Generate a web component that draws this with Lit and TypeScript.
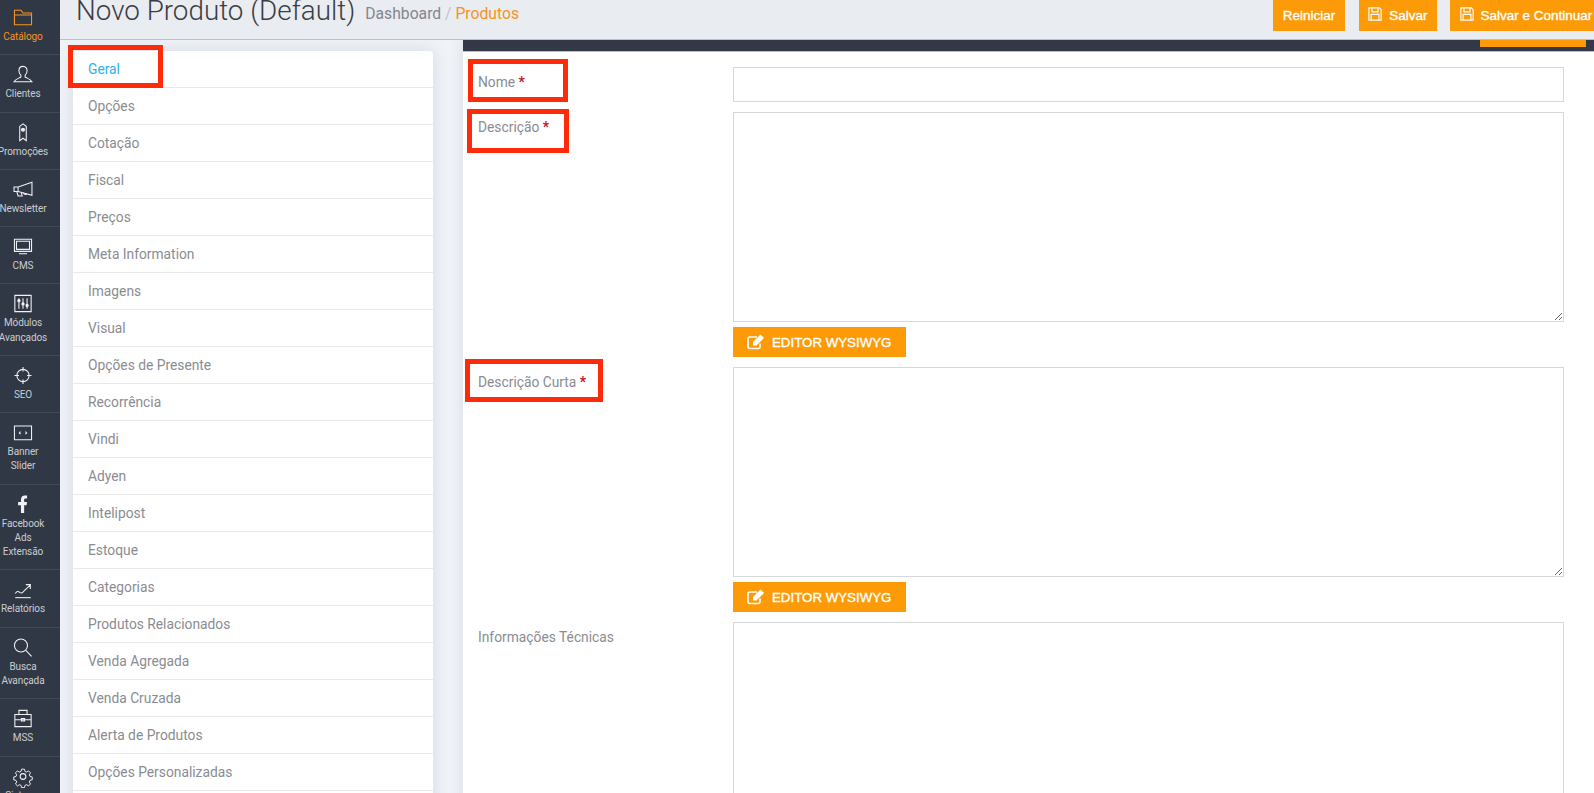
import { LitElement, html, css, svg } from 'lit';
import { customElement } from 'lit/decorators.js';

type NavItem = {
  label: string[];
  icon: unknown;
  active?: boolean;
};

const icons = {
  folder: svg`<path d="M3 21.500V3.500h8l2.500 3.500H24v14.500z M3 9.500h21"/>`,
  user: svg`<path d="M13.500 2.500c-3.400 0-5 2.600-5 5.400 0 2.400 1 4.200 2.400 5.600v2.100c-1.600 1.200-6.400 2-8.400 5.900h22c-2-3.900-6.800-4.700-8.400-5.900v-2.100c1.400-1.400 2.400-3.200 2.400-5.600 0-2.800-1.600-5.400-5-5.400z"/>`,
  ribbon: svg`<path d="M9.500 5l4-3 4 3v17.500l-4-3-4 3z"/><circle cx="13.500" cy="9" r="1.800" fill="currentColor"/>`,
  megaphone: svg`<path d="M2.500 9.500h5l17-6v16l-17-4.500h-5z M7.500 9.500V15"/><path d="M6 15.500l1.500 5h5l-1-4 M14 16.500a2.500 2.500 0 0 0 4 1.500"/>`,
  monitor: svg`<path d="M3 3.500h21v15H3z M5.500 6h16v10h-16z M8.500 21.500h10"/>`,
  sliders: svg`<path d="M3.500 2.500h20v20h-20z"/><path d="M8.500 6v13 M13.500 6v13 M18.500 6v13"/><circle cx="8.500" cy="9" r="1.400" fill="currentColor"/><circle cx="13.500" cy="13" r="1.400" fill="currentColor"/><circle cx="18.500" cy="15" r="1.400" fill="currentColor"/>`,
  target: svg`<circle cx="13.500" cy="12.500" r="7.500"/><path d="M13.500 2v5.500 M13.500 17.500V23 M3 12.500h5.500 M18.500 12.500H24"/>`,
  code: svg`<path d="M3 4.500h21v17H3z"/><path d="M10.500 11.500L9 13l1.500 1.500 M16.500 11.500L18 13l-1.500 1.500"/>`,
  trend: svg`<path d="M4 22.500h19"/><path d="M4 17.500c2-3 3.500-3 5.500-1.500s3.500 1 6-2.500l6.500-6 M17 6.500h5.500V12"/>`,
  search: svg`<circle cx="11" cy="10" r="8"/><path d="M17 16l7 7.500"/>`,
  briefcase: svg`<path d="M3.500 7.500h20v15h-20z M3.500 14h20 M8.500 7.500v-5h10v5 M11.500 12.500h4v3h-4z"/>`,
  gear: svg`<circle cx="13.500" cy="12.500" r="3.500"/><path d="M11.500 2.500h4l.6 3 2.300 1 2.600-1.700 2.800 2.800-1.700 2.600 1 2.300 3 .6v4l-3 .6-1 2.300 1.700 2.600-2.800 2.800-2.600-1.700-2.300 1-.6 3h-4l-.6-3-2.300-1-2.600 1.700-2.800-2.800 1.700-2.600-1-2.300-3-.6v-4l3-.6 1-2.300-1.700-2.600 2.800-2.800 2.600 1.700 2.300-1z" transform="translate(1.350 1.250) scale(.9)"/>`,
  facebook: svg`<path class="solid" d="M11 23v-9.500H7.500V9.500H11V6.500C11 3.500 12.800 1.500 15.800 1.500c1.300 0 2.500.1 2.700.1v3.600h-1.900c-1.400 0-1.700.7-1.700 1.800v2.500h3.500l-.5 4h-3V23z"/>`,
};

const navItems: NavItem[] = [
  { label: ['Catálogo'], icon: icons.folder, active: true },
  { label: ['Clientes'], icon: icons.user },
  { label: ['Promoções'], icon: icons.ribbon },
  { label: ['Newsletter'], icon: icons.megaphone },
  { label: ['CMS'], icon: icons.monitor },
  { label: ['Módulos', 'Avançados'], icon: icons.sliders },
  { label: ['SEO'], icon: icons.target },
  { label: ['Banner', 'Slider'], icon: icons.code },
  { label: ['Facebook', 'Ads', 'Extensão'], icon: icons.facebook },
  { label: ['Relatórios'], icon: icons.trend },
  { label: ['Busca', 'Avançada'], icon: icons.search },
  { label: ['MSS'], icon: icons.briefcase },
  { label: ['Sistema'], icon: icons.gear },
];

const tabs = [
  'Geral', 'Opções', 'Cotação', 'Fiscal', 'Preços', 'Meta Information', 'Imagens',
  'Visual', 'Opções de Presente', 'Recorrência', 'Vindi', 'Adyen', 'Intelipost',
  'Estoque', 'Categorias', 'Produtos Relacionados', 'Venda Agregada', 'Venda Cruzada',
  'Alerta de Produtos', 'Opções Personalizadas', 'Downloads',
];

const saveIcon = html`<svg class="btn-icon" viewBox="0 0 16 16" fill="none" stroke="currentColor" stroke-width="1.300">
  <path d="M1 1h12l2 2v12H1z M4.500 1v4.500h7V1 M3.500 15V8.500h9V15"/>
</svg>`;

const editIcon = html`<svg class="edit-icon" viewBox="0 0 18 16">
  <path d="M13 9.500v3a2 2 0 0 1-2 2H3a2 2 0 0 1-2-2V5a2 2 0 0 1 2-2h7" fill="none" stroke="currentColor" stroke-width="1.600"/>
  <path d="M6 8l7.500-7.500 3.500 3.500L9.500 11.500H6z" fill="currentColor"/>
</svg>`;

@customElement('app-root')
export class AppRoot extends LitElement {
  static styles = css`
    :host {
      display: block;
      position: relative;
      height: 793px;
      overflow: hidden;
      background: #f0f3f8;
      font-family: Roboto, 'Liberation Sans', sans-serif;
    }

    .page {
      display: grid;
      grid-template-columns: 60px 1fr;
      height: 793px;
    }

    .side {
      background: #313845;
      overflow: hidden;
    }

    .side-inner {
      margin-top: -2px;
    }

    .nav-item {
      display: flex;
      flex-direction: column;
      align-items: center;
      padding: 8px 14px 10.100px 0;
      border-bottom: 1px solid #434a56;
      color: #f1f2f4;
      overflow: hidden;
      white-space: nowrap;
    }

    .nav-item.active {
      color: #f7941d;
    }

    .nav-item svg {
      width: 22px;
      height: 23px;
      fill: none;
      stroke: currentColor;
      stroke-width: 1.300;
      flex: none;
    }

    .nav-item svg .solid {
      fill: currentColor;
      stroke: none;
    }

    .nav-label {
      font-size: 10px;
      line-height: 14.200px;
      letter-spacing: -0.1px;
      color: #c9ccd2;
      text-align: center;
      margin-top: 1px;
    }

    .nav-item.active .nav-label {
      color: #f7941d;
    }

    .main {
      display: flex;
      flex-direction: column;
      min-width: 0;
    }

    .header {
      display: flex;
      justify-content: space-between;
      height: 39px;
      flex: none;
      background: #e9ecf1;
      border-bottom: 1px solid #bcc0c6;
      overflow: hidden;
    }

    .crumbs {
      display: flex;
      align-items: center;
      height: 40px;
      padding-left: 16px;
      margin-top: -9px;
    }

    h1 {
      margin: 0;
      font-size: 27.800px;
      line-height: 40px;
      font-weight: 300;
      color: #3a3d44;
    }

    .path {
      margin-left: 10px;
      padding-top: 4px;
      font-size: 15.700px;
      color: #83868c;
    }

    .path .sep {
      color: #c2c5ca;
    }

    .path .here {
      color: #f7941d;
    }

    .actions {
      display: flex;
      align-items: flex-start;
      gap: 14px;
    }

    .btn,
    .wysiwyg {
      display: flex;
      align-items: center;
      border: 0;
      background: #fd9a08;
      color: #fff;
      font: 13.500px 'Liberation Sans', sans-serif;
      -webkit-text-stroke: 0.35px #fff;
      white-space: nowrap;
    }

    .btn {
      height: 31px;
      padding: 0 9.500px;
    }

    .btn-icon {
      width: 14px;
      height: 14px;
      margin-right: 7px;
      margin-top: -3px;
    }

    .btn.wide {
      margin-left: -1px;
      padding-right: 0;
      width: 144px;
      box-sizing: border-box;
    }

    .body {
      display: grid;
      grid-template-columns: 360px 1fr;
      column-gap: 30px;
      padding-left: 13px;
      flex: 1;
      min-height: 0;
      overflow: hidden;
    }

    .tabs {
      margin: 11px 0 0;
      padding: 0;
      list-style: none;
      background: #fff;
      border-radius: 4px 4px 0 0;
      box-shadow: 0 0 18px rgba(60, 70, 90, 0.14);
    }

    .tabs li {
      height: 36px;
      line-height: 36px;
      padding-left: 15px;
      border-bottom: 1px solid #e9e9ea;
      font-size: 13.800px;
      color: #8a8c91;
    }

    .tabs li.current {
      color: #2fb0ea;
    }

    .panel {
      position: relative;
      background: #fff;
      box-shadow: 0 0 14px rgba(60, 70, 90, 0.12);
    }

    .bar {
      height: 11px;
      background: #323845;
      border-bottom: 1px solid #bcc0c6;
    }

    .bar-btn {
      position: absolute;
      top: 0;
      right: 8px;
      width: 106px;
      height: 7px;
      background: #fd9a08;
    }

    .form {
      display: grid;
      grid-template-columns: 270px 831px;
      row-gap: 10px;
      padding: 15px 0 0;
    }

    .form label {
      padding: 7px 0 0 15px;
      font-size: 13.800px;
      line-height: 17px;
      color: #8a8c91;
    }

    .req {
      color: #c8101e;
      font-weight: 700;
    }

    .field {
      display: flex;
      flex-direction: column;
      align-items: flex-start;
      gap: 5px;
    }

    .input,
    .area {
      display: block;
      width: 100%;
      box-sizing: border-box;
      margin: 0;
      border: 1px solid #d8d8d8;
      border-radius: 0;
      background: #fff;
      outline: none;
    }

    .input {
      height: 35px;
    }

    .area {
      height: 210px;
      resize: vertical;
    }

    .area.tall {
      height: 300px;
    }

    .wysiwyg {
      width: 173px;
      height: 30px;
      padding: 0 0 0 14px;
      box-sizing: border-box;
      font-size: 13.300px;
    }

    .edit-icon {
      width: 18px;
      height: 16px;
      margin-right: 7px;
    }

    .mark {
      position: absolute;
      box-sizing: border-box;
      border: 5px solid #ff2a0a;
      pointer-events: none;
    }

    .mark-geral { left: 68px; top: 45px; width: 95px; height: 43px; }
    .mark-nome { left: 468px; top: 59px; width: 100px; height: 43px; }
    .mark-desc { left: 467px; top: 109px; width: 102px; height: 44px; }
    .mark-curta { left: 465px; top: 359px; width: 138px; height: 43px; }
  `;

  private renderNavItem(item: NavItem) {
    return html`
      <div class="nav-item ${item.active ? 'active' : ''}">
        <svg viewBox="0 0 27 25">${item.icon}</svg>
        <div class="nav-label">${item.label.map(line => html`<div>${line}</div>`)}</div>
      </div>
    `;
  }

  private renderField(label: string, required: boolean, control: unknown) {
    return html`
      <label>${label}${required ? html` <span class="req">*</span>` : ''}</label>
      <div class="field">${control}</div>
    `;
  }

  private renderEditor(tall = false) {
    if (tall) return html`<textarea class="area tall"></textarea>`;
    return html`
      <textarea class="area"></textarea>
      <button class="wysiwyg">${editIcon}EDITOR WYSIWYG</button>
    `;
  }

  render() {
    return html`
      <div class="page">
        <nav class="side">
          <div class="side-inner">${navItems.map(item => this.renderNavItem(item))}</div>
        </nav>
        <div class="main">
          <header class="header">
            <div class="crumbs">
              <h1>Novo Produto (Default)</h1>
              <div class="path">Dashboard <span class="sep">/</span> <span class="here">Produtos</span></div>
            </div>
            <div class="actions">
              <button class="btn">Reiniciar</button>
              <button class="btn">${saveIcon}Salvar</button>
              <button class="btn wide">${saveIcon}Salvar e Continuar</button>
            </div>
          </header>
          <div class="body">
            <ul class="tabs">
              ${tabs.map((tab, i) => html`<li class="${i === 0 ? 'current' : ''}">${tab}</li>`)}
            </ul>
            <section class="panel">
              <div class="bar"></div>
              <div class="bar-btn"></div>
              <div class="form">
                ${this.renderField('Nome', true, html`<input class="input" type="text" />`)}
                ${this.renderField('Descrição', true, this.renderEditor())}
                ${this.renderField('Descrição Curta', true, this.renderEditor())}
                ${this.renderField('Informações Técnicas', false, this.renderEditor(true))}
              </div>
            </section>
          </div>
        </div>
      </div>
      <div class="mark mark-geral"></div>
      <div class="mark mark-nome"></div>
      <div class="mark mark-desc"></div>
      <div class="mark mark-curta"></div>
    `;
  }
}
